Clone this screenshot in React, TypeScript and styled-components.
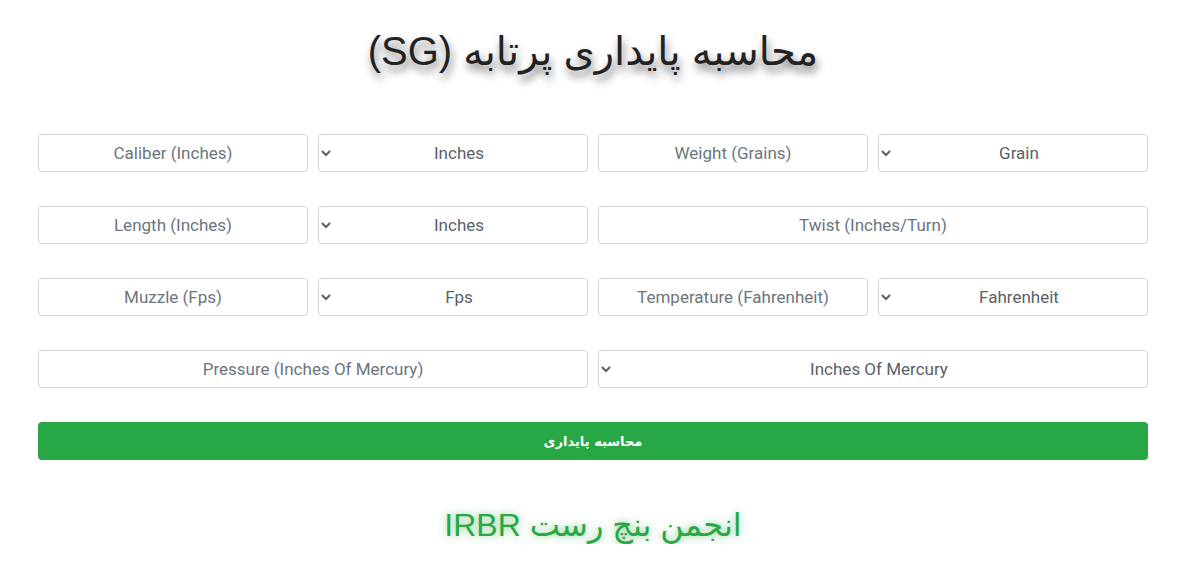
import React from "react";
import styled, { createGlobalStyle } from "styled-components";

const GlobalStyle = createGlobalStyle`
  body {
    margin: 0;
    background: #fff;
    font-family: Roboto, "DejaVu Sans", sans-serif;
    color: #212529;
  }
`;

const Container = styled.div`
  max-width: 1110px;
  margin: 0 auto;
  padding: 0 38px;
`;

const Title = styled.h1`
  margin: 0;
  padding-top: 28px;
  height: 134px;
  box-sizing: border-box;
  text-align: center;
  font-family: "Liberation Sans", "DejaVu Sans", sans-serif;
  font-weight: 400;
  font-size: 40px;
  color: #222;
  text-shadow: 2px 6px 8px rgba(0, 0, 0, 0.55);
`;

const Form = styled.form`
  display: grid;
  grid-template-columns: repeat(4, 1fr);
  column-gap: 10px;
  row-gap: 34px;
`;

const Field = styled.input<{ $span?: number }>`
  grid-column: span ${(p) => p.$span || 1};
  height: 38px;
  box-sizing: border-box;
  border: 1px solid #ced4da;
  border-radius: 4px;
  text-align: center;
  font-family: Roboto, "DejaVu Sans", sans-serif;
  font-size: 17px;
  color: #495057;
  background: #fff;
  &::placeholder {
    color: #6c757d;
  }
`;

const Select = styled.select<{ $span?: number }>`
  grid-column: span ${(p) => p.$span || 1};
  height: 38px;
  box-sizing: border-box;
  border: 1px solid #ced4da;
  border-radius: 4px;
  text-align: center;
  text-align-last: center;
  font-family: Roboto, "DejaVu Sans", sans-serif;
  font-size: 17px;
  color: #5a6168;
  background: #fff;
  padding: 0 6px;
`;

const Submit = styled.button`
  grid-column: span 4;
  height: 38px;
  border: none;
  border-radius: 4px;
  background: #28a745;
  color: #fff;
  font-family: "DejaVu Sans", sans-serif;
  font-weight: 700;
  font-size: 13px;
`;

const Footer = styled.h2`
  margin: 0;
  padding-top: 46px;
  text-align: center;
  font-family: "Liberation Sans", "DejaVu Sans", sans-serif;
  font-weight: 400;
  font-size: 32px;
  color: #28a745;
  text-shadow: 0 0 8px rgba(40, 167, 69, 0.6);
`;

const App: React.FC = () => {
  return (
    <>
      <GlobalStyle />
      <Container>
        <Title dir="rtl">محاسبه پایداری پرتابه (SG)</Title>
        <Form onSubmit={(e) => e.preventDefault()}>
          <Field placeholder="Caliber (Inches)" />
          <Select dir="rtl" defaultValue="Inches">
            <option>Inches</option>
            <option>Millimeters</option>
          </Select>
          <Field placeholder="Weight (Grains)" />
          <Select dir="rtl" defaultValue="Grain">
            <option>Grain</option>
            <option>Gram</option>
          </Select>

          <Field placeholder="Length (Inches)" />
          <Select dir="rtl" defaultValue="Inches">
            <option>Inches</option>
            <option>Millimeters</option>
          </Select>
          <Field $span={2} placeholder="Twist (Inches/Turn)" />

          <Field placeholder="Muzzle (Fps)" />
          <Select dir="rtl" defaultValue="Fps">
            <option>Fps</option>
            <option>Mps</option>
          </Select>
          <Field placeholder="Temperature (Fahrenheit)" />
          <Select dir="rtl" defaultValue="Fahrenheit">
            <option>Fahrenheit</option>
            <option>Celsius</option>
          </Select>

          <Field $span={2} placeholder="Pressure (Inches Of Mercury)" />
          <Select $span={2} dir="rtl" defaultValue="Inches Of Mercury">
            <option>Inches Of Mercury</option>
            <option>Millibar</option>
          </Select>

          <Submit type="submit">محاسبه پایداری</Submit>
        </Form>
        <Footer dir="rtl">انجمن بنچ رست IRBR</Footer>
      </Container>
    </>
  );
};

export default App;
